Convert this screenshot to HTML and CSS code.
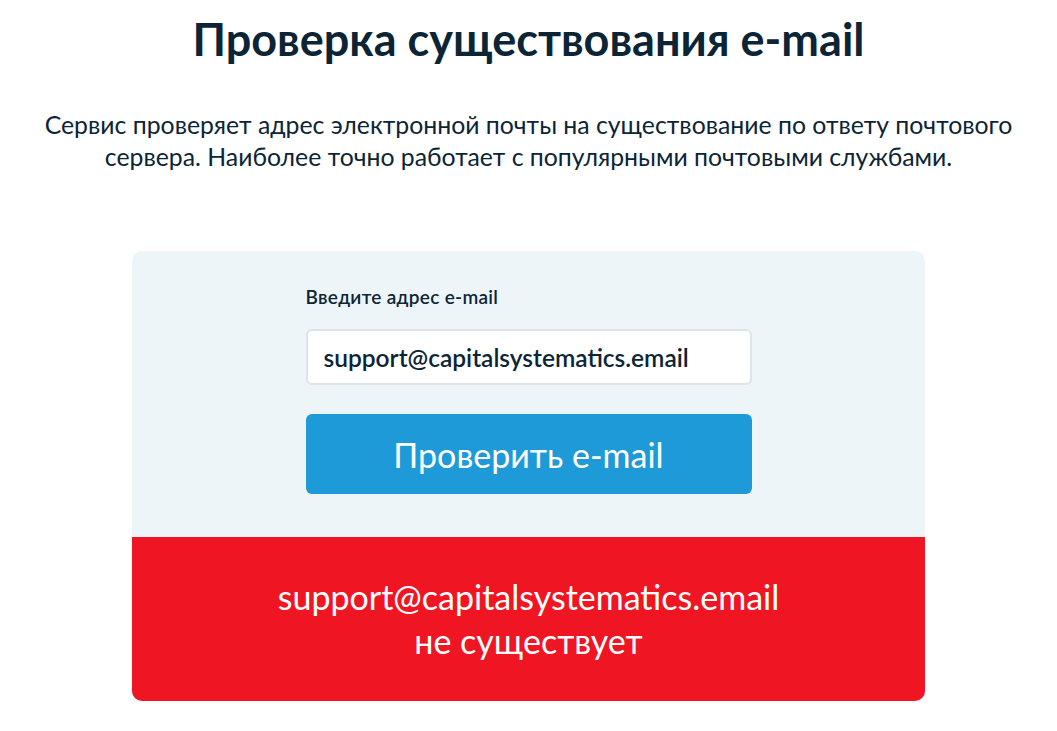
FILE: index.html
```html
<!DOCTYPE html>
<html lang="ru">
<head>
    <meta charset="UTF-8">
    <meta name="viewport" content="width=device-width, initial-scale=1.0">
    <title>Проверка существования e-mail</title>
    <link rel="stylesheet" href="styles.css">
</head>
<body>
    <h1 class="page-title">Проверка существования e-mail</h1>
    <p class="intro">Сервис проверяет адрес электронной почты на существование по ответу почтового сервера. Наиболее точно работает с популярными почтовыми службами.</p>

    <div class="checker">
        <form class="checker-form" onsubmit="return false">
            <label for="emailInput" class="field-label">Введите адрес e-mail</label>
            <input type="text" id="emailInput" class="email-input" value="support@capitalsystematics.email">
            <button type="submit" class="check-button">Проверить e-mail</button>
        </form>
        <div class="result result-bad">
            support@capitalsystematics.email<br>не существует
        </div>
    </div>
</body>
</html>
```

FILE: styles.css
```css
body {
    margin: 0;
    font-family: "Lato", "Noto Sans", sans-serif;
    color: #0c2536;
    background-color: #fff;
}

.page-title {
    margin: 13px 0 0;
    text-align: center;
    font-size: 45px;
    font-weight: 700;
    line-height: 52px;
}

.intro {
    max-width: 1010px;
    margin: 44px auto 0;
    text-align: center;
    font-size: 24.8px;
    line-height: 32px;
}

.checker {
    width: 793px;
    margin: 78px auto 0;
    border-radius: 10px;
    overflow: hidden;
    background-color: #eef5f9;
}

.checker-form {
    width: 446px;
    margin: 0 auto;
    padding: 35px 0 43px;
    display: flex;
    flex-direction: column;
}

.field-label {
    font-size: 19px;
    font-weight: 600;
    line-height: 22px;
    letter-spacing: 0.3px;
    margin-bottom: 21px;
}

.email-input {
    height: 56px;
    box-sizing: border-box;
    padding: 0 16px;
    border: 2px solid #dde3e6;
    border-radius: 6px;
    font-family: inherit;
    font-size: 24.5px;
    font-weight: 600;
    color: #0c2536;
    background: #fff;
    margin-bottom: 29px;
}

.check-button {
    height: 80px;
    border: none;
    border-radius: 6px;
    background-color: #1e9ad8;
    color: #fff;
    font-family: inherit;
    font-size: 34px;
    cursor: pointer;
}

.check-button:hover {
    background-color: #1a8bc4;
}

.result {
    height: 164px;
    display: flex;
    align-items: center;
    justify-content: center;
    text-align: center;
    color: #fff;
    font-size: 34px;
    line-height: 44px;
}

.result-bad {
    background-color: #f01523;
}
```
